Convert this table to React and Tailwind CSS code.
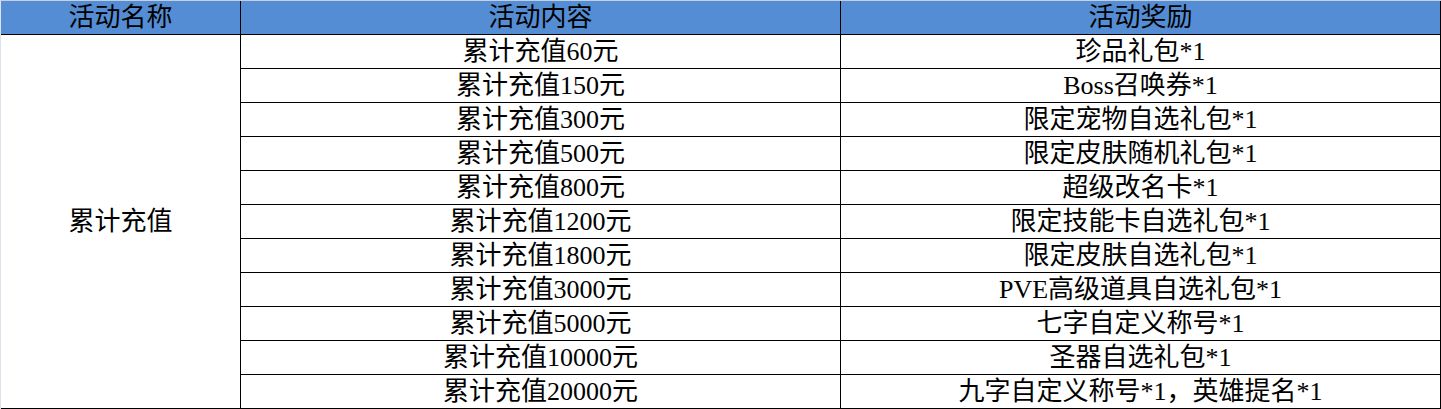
import React from 'react';

const rows = [
  ['累计充值60元', '珍品礼包*1'],
  ['累计充值150元', 'Boss召唤券*1'],
  ['累计充值300元', '限定宠物自选礼包*1'],
  ['累计充值500元', '限定皮肤随机礼包*1'],
  ['累计充值800元', '超级改名卡*1'],
  ['累计充值1200元', '限定技能卡自选礼包*1'],
  ['累计充值1800元', '限定皮肤自选礼包*1'],
  ['累计充值3000元', 'PVE高级道具自选礼包*1'],
  ['累计充值5000元', '七字自定义称号*1'],
  ['累计充值10000元', '圣器自选礼包*1'],
  ['累计充值20000元', '九字自定义称号*1，英雄提名*1'],
];

const cell = 'flex items-center justify-center border-r border-b border-black h-[34px] leading-none';

const App = () => {
  return (
    <div className="w-[1441px] h-[409px] bg-white text-black text-[26px] [font-family:'Liberation_Serif','Noto_Sans_CJK_SC',serif]">
      <div className="grid grid-cols-[240px_600px_600px] border-t border-l border-t-[#c6cfdd] border-l-[#dce3ef]">
        {/* Header */}
        <div className={`${cell} bg-[#548dd4]`}>活动名称</div>
        <div className={`${cell} bg-[#548dd4]`}>活动内容</div>
        <div className={`${cell} bg-[#548dd4]`}>活动奖励</div>

        {/* Merged name cell */}
        <div className="row-span-11 flex items-center justify-center border-r border-b border-black leading-none">
          累计充值
        </div>

        {rows.map(([content, reward], index) => (
          <React.Fragment key={index}>
            <div className={cell}>{content}</div>
            <div className={cell}>{reward}</div>
          </React.Fragment>
        ))}
      </div>
    </div>
  );
};

export default App;
